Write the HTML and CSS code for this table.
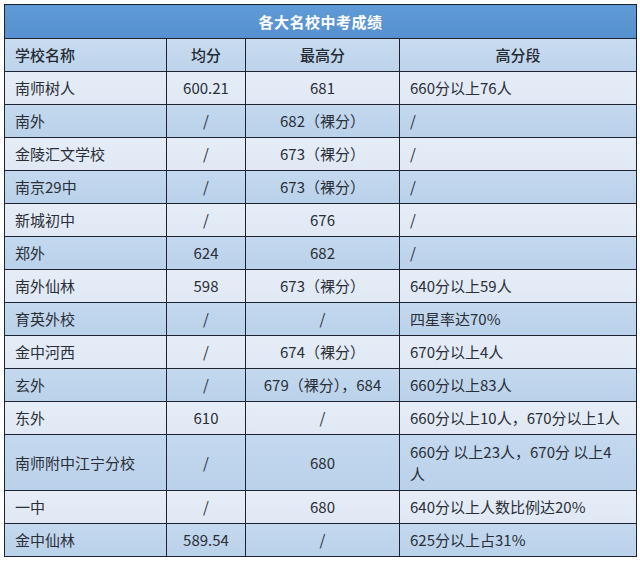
FILE: index.html
```html
<!DOCTYPE html>
<html lang="zh-CN">
<head>
<meta charset="utf-8">
<title>各大名校中考成绩</title>
<link rel="stylesheet" href="styles.css">
</head>
<body>
<table class="scores">
  <colgroup>
    <col class="c-name">
    <col class="c-avg">
    <col class="c-max">
    <col class="c-seg">
  </colgroup>
  <thead>
    <tr class="title-row"><th colspan="4" class="title">各大名校中考成绩</th></tr>
    <tr class="head-row">
      <th class="left">学校名称</th>
      <th class="center">均分</th>
      <th class="center">最高分</th>
      <th class="center">高分段</th>
    </tr>
  </thead>
  <tbody>
    <tr class="light"><td class="left">南师树人</td><td class="center">600.21</td><td class="center">681</td><td class="left">660分以上76人</td></tr>
    <tr class="dark"><td class="left">南外</td><td class="center">/</td><td class="center">682（裸分）</td><td class="left">/</td></tr>
    <tr class="light"><td class="left">金陵汇文学校</td><td class="center">/</td><td class="center">673（裸分）</td><td class="left">/</td></tr>
    <tr class="dark"><td class="left">南京29中</td><td class="center">/</td><td class="center">673（裸分）</td><td class="left">/</td></tr>
    <tr class="light"><td class="left">新城初中</td><td class="center">/</td><td class="center">676</td><td class="left">/</td></tr>
    <tr class="dark"><td class="left">郑外</td><td class="center">624</td><td class="center">682</td><td class="left">/</td></tr>
    <tr class="light"><td class="left">南外仙林</td><td class="center">598</td><td class="center">673（裸分）</td><td class="left">640分以上59人</td></tr>
    <tr class="dark"><td class="left">育英外校</td><td class="center">/</td><td class="center">/</td><td class="left">四星率达70%</td></tr>
    <tr class="light"><td class="left">金中河西</td><td class="center">/</td><td class="center">674（裸分）</td><td class="left">670分以上4人</td></tr>
    <tr class="dark"><td class="left">玄外</td><td class="center">/</td><td class="center">679（裸分），684</td><td class="left">660分以上83人</td></tr>
    <tr class="light"><td class="left">东外</td><td class="center">610</td><td class="center">/</td><td class="left">660分以上10人，670分以上1人</td></tr>
    <tr class="dark tall"><td class="left">南师附中江宁分校</td><td class="center">/</td><td class="center">680</td><td class="left wrap">660分 以上23人，670分 以上4<br>人</td></tr>
    <tr class="light"><td class="left">一中</td><td class="center">/</td><td class="center">680</td><td class="left">640分以上人数比例达20%</td></tr>
    <tr class="dark"><td class="left">金中仙林</td><td class="center">589.54</td><td class="center">/</td><td class="left">625分以上占31%</td></tr>
  </tbody>
</table>
</body>
</html>
```

FILE: styles.css
```css
html, body {
  margin: 0;
  padding: 0;
  background: #ffffff;
}

body {
  padding: 4px;
  font-family: "Noto Sans CJK SC", "Noto Sans", "Liberation Sans", sans-serif;
  color: #2b2e36;
  font-size: 15px;
}

.scores {
  border-collapse: collapse;
  width: 632px;
  table-layout: fixed;
  border: 1.5px solid #1f2330;
}

.c-name { width: 162px; }
.c-avg { width: 79px; }
.c-max { width: 154px; }
.c-seg { width: 237px; }

.scores th,
.scores td {
  border: 1px solid #1f2330;
  padding: 0 10px;
  line-height: 22px;
  white-space: nowrap;
  overflow: hidden;
}

.title-row {
  height: 34px;
}

.title {
  background: linear-gradient(#5f9bd6, #5690cf);
  color: #ffffff;
  font-weight: 700;
  text-align: center;
  font-size: 15px;
  letter-spacing: 0.5px;
}

.head-row {
  height: 33px;
  background: linear-gradient(#c9dcf0, #bcd3eb);
}

.head-row th {
  font-weight: 500;
  color: #262a33;
}

tbody tr {
  height: 33px;
}

tbody tr.light {
  background: linear-gradient(#e6edf7, #dfe8f4);
}

tbody tr.dark {
  background: linear-gradient(#c4d9ef, #b9d1ea);
}

tbody tr.tall {
  height: 56px;
}

.left { text-align: left; }
.center { text-align: center; }

.wrap {
  white-space: normal;
  line-height: 23px;
}
```
